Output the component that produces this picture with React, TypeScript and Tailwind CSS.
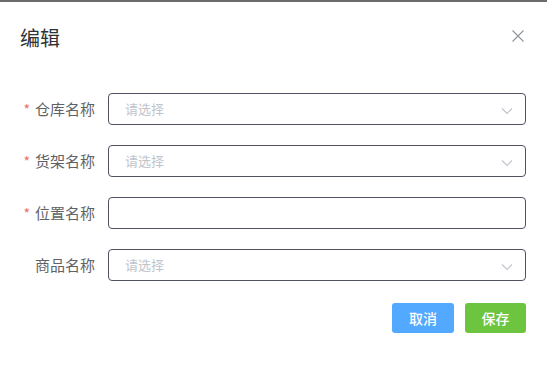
import React from "react";

const font = { fontFamily: '"Noto Sans CJK SC", "Noto Sans", sans-serif' };

function Chevron() {
  return (
    <svg width="12" height="8" viewBox="0 0 12 8" className="absolute right-[12px] top-[13px]">
      <path d="M1 1.5 L6 6.5 L11 1.5" fill="none" stroke="#c0c4cc" strokeWidth="1.1" />
    </svg>
  );
}

function Row({ label, required, select }: { label: string; required?: boolean; select?: boolean }) {
  return (
    <div className="flex items-center h-8">
      <div className="w-[88px] pr-[13px] flex justify-end items-center text-[15px] text-[#606266]">
        {required && <span className="text-[#f56c6c] mr-[5px] text-[14px]">*</span>}
        <span>{label}</span>
      </div>
      <div className="relative flex-1 h-8 border border-[#4f5361] rounded-[4px] flex items-center pl-[16px]">
        {select && <span className="text-[13px] text-[#c0c4cc]">请选择</span>}
        {select && <Chevron />}
      </div>
    </div>
  );
}

export default function App() {
  return (
    <div className="w-[547px] h-[382px] bg-white border-t-[2px] border-[#6b6b6b] overflow-hidden" style={font}>
      <div className="flex items-center justify-between pl-[20px] pr-[23px] pt-[22px] h-[50px]">
        <span className="text-[20px] leading-[24px] text-[#303133]">编辑</span>
        <svg width="12" height="12" viewBox="0 0 12 12" className="mt-[-4px]">
          <path d="M0.5 0.5 L11.5 11.5 M11.5 0.5 L0.5 11.5" stroke="#909399" strokeWidth="1.1" />
        </svg>
      </div>
      <div className="pl-[20px] pr-[21px] pt-[41px] flex flex-col gap-[20px]">
        <Row label="仓库名称" required select />
        <Row label="货架名称" required select />
        <Row label="位置名称" required />
        <Row label="商品名称" select />
      </div>
      <div className="flex justify-end gap-[11px] pr-[21px] pt-[22px]">
        <button className="w-[62px] h-[30px] rounded-[3px] bg-[#53a8ff] text-white text-[14px] font-medium">取消</button>
        <button className="w-[61px] h-[30px] rounded-[3px] bg-[#6cc43f] text-white text-[14px] font-medium">保存</button>
      </div>
    </div>
  );
}
